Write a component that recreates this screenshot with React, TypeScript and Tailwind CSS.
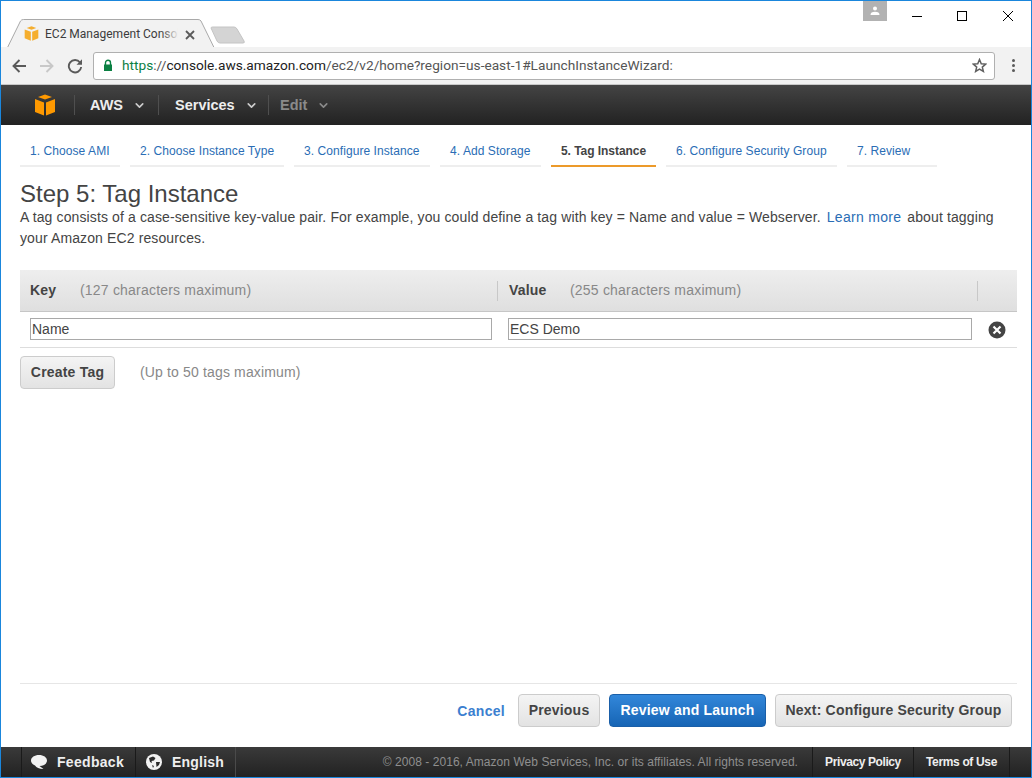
import { ChevronDown } from 'lucide-react'

const steps = [
  { label: '1. Choose AMI', w: 'w-[100px]' },
  { label: '2. Choose Instance Type', w: 'w-[154px]' },
  { label: '3. Configure Instance', w: 'w-[136px]' },
  { label: '4. Add Storage', w: 'w-[101px]' },
  { label: '5. Tag Instance', w: 'w-[105px]', active: true },
  { label: '6. Configure Security Group', w: 'w-[171px]' },
  { label: '7. Review', w: 'w-[90px]' },
]

function AwsCube({ size, fill }: { size: number; fill: string }) {
  return (
    <svg width={size} height={size} viewBox="0 0 22 22" fill={fill}>
      <path d="M11 0.5 L18 3 L11 5.5 L4 3 Z" />
      <path d="M1 5 L10 8.5 V21.5 L1 18 Z" />
      <path d="M21 5 L12 8.5 V21.5 L21 18 Z" />
    </svg>
  )
}

function TabStrip() {
  return (
    <div className="relative h-[46px] shrink-0 bg-white">
      <svg className="absolute left-0 top-0" width="260" height="46" viewBox="0 0 260 46">
        <path d="M0 46.5 H6.5 L19.5 20 Q20.5 18.5 22.5 18.5 H197 Q199 18.5 200 20 L213 46.5 H260" fill="#f2f2f2" stroke="#a9a9a9" strokeWidth="1" />
        <path d="M210 27 Q210 26 211.5 26 H233 Q235 26 236 28 L243 40 Q244 42 242 42 H219 Q217 42 216 40 Z" fill="#d4d4d4" stroke="#c4c4c4" strokeWidth="1" />
      </svg>
      <div className="absolute left-[23px] top-[25px]">
        <AwsCube size={15} fill="#f5ae2e" />
      </div>
      <div className="absolute left-[44px] top-[25px] w-[133px] overflow-hidden whitespace-nowrap text-[12px] leading-[16px] text-[#3c3c3c] font-['Roboto','Open_Sans',sans-serif]">
        EC2 Management Console
      </div>
      <div className="absolute left-[160px] top-[25px] h-[16px] w-[18px] bg-gradient-to-r from-transparent to-[#f2f2f2]" />
      <svg className="absolute left-[184px] top-[29px]" width="10" height="10" viewBox="0 0 10 10">
        <path d="M1 1 L9 9 M9 1 L1 9" stroke="#5a5a5a" strokeWidth="1.8" />
      </svg>
      <div className="absolute left-[862px] top-0 flex h-[20px] w-[24px] items-center justify-center bg-[#b2b2b2]">
        <svg width="12" height="12" viewBox="0 0 12 12">
          <circle cx="6" cy="3.5" r="2" fill="#fff" />
          <path d="M1.5 10 Q1.5 6.8 6 6.8 Q10.5 6.8 10.5 10 Z" fill="#fff" />
        </svg>
      </div>
      <svg className="absolute left-[910px] top-[8px]" width="110" height="16" viewBox="0 0 110 16">
        <path d="M1 7.5 H11" stroke="#000" strokeWidth="1" />
        <rect x="46.5" y="2.5" width="9" height="9" fill="none" stroke="#000" strokeWidth="1" />
        <path d="M92 2 L102 12 M102 2 L92 12" stroke="#000" strokeWidth="1" />
      </svg>
    </div>
  )
}

function Toolbar() {
  return (
    <div className="flex h-[37px] shrink-0 items-center bg-[#f2f2f2] pl-[10px]">
      <svg width="18" height="16" viewBox="0 0 18 16" className="mr-[9px]">
        <path d="M15 8 H3 M8.5 2 L2.5 8 L8.5 14" fill="none" stroke="#5a5a5a" strokeWidth="1.9" />
      </svg>
      <svg width="18" height="16" viewBox="0 0 18 16" className="mr-[11px]">
        <path d="M2 8 H14 M8.5 2 L14.5 8 L8.5 14" fill="none" stroke="#c8c8c8" strokeWidth="1.9" />
      </svg>
      <svg width="16" height="16" viewBox="0 0 16 16" className="mr-[10px]">
        <path d="M13 4.5 A6.2 6.2 0 1 0 14.2 9" fill="none" stroke="#5a5a5a" strokeWidth="1.9" />
        <path d="M9.5 6.8 H15 V1.3 Z" fill="#5a5a5a" />
      </svg>
      <div className="flex h-[28px] w-[902px] items-center rounded-[3px] border border-[#b0b0b0] bg-white pl-[9px] pr-[7px]">
        <svg width="10" height="13" viewBox="0 0 10 13" className="mr-[9px] shrink-0">
          <path d="M2.5 6 V3.8 A2.5 2.5 0 0 1 7.5 3.8 V6" fill="none" stroke="#0b8043" strokeWidth="1.4" />
          <rect x="1" y="5.5" width="8" height="6.5" fill="#0b8043" />
        </svg>
        <span className="flex-1 whitespace-nowrap text-[13.7px] font-['Roboto','Open_Sans',sans-serif] text-[#555]">
          <span className="text-[#0b8043]">https</span>
          ://
          <span className="text-[#222]">console.aws.amazon.com</span>
          /ec2/v2/home?region=us-east-1#LaunchInstanceWizard:
        </span>
        <svg width="15" height="15" viewBox="0 0 24 24">
          <path d="M12 2.5 L14.8 9.2 L22 9.8 L16.5 14.5 L18.2 21.5 L12 17.8 L5.8 21.5 L7.5 14.5 L2 9.8 L9.2 9.2 Z" fill="none" stroke="#5f5f5f" strokeWidth="2.4" />
        </svg>
      </div>
      <div className="ml-[17px] flex flex-col gap-[2px]">
        <span className="h-[3px] w-[3px] rounded-full bg-[#5a5a5a]" />
        <span className="h-[3px] w-[3px] rounded-full bg-[#5a5a5a]" />
        <span className="h-[3px] w-[3px] rounded-full bg-[#5a5a5a]" />
      </div>
    </div>
  )
}

function NavBar() {
  return (
    <div className="flex h-[41px] shrink-0 items-center border-t border-[#c8c8c8] bg-gradient-to-b from-[#444444] to-[#222222] font-['Liberation_Sans',sans-serif] text-[14.5px] font-bold">
      <div className="flex w-[73px] justify-end pr-[18px]">
        <AwsCube size={22} fill="#ff9900" />
      </div>
      <div className="flex h-[20px] w-[84px] items-center border-l border-[#4f4f4f] pl-[15px] text-[#eeeeee]">
        <span className="pt-[2px]">AWS</span>
        <ChevronDown size={13} strokeWidth={3} className="ml-[10px] text-[#cccccc]" />
      </div>
      <div className="flex h-[20px] w-[110px] items-center border-l border-[#4f4f4f] pl-[16px] text-[#eeeeee]">
        <span className="pt-[2px]">Services</span>
        <ChevronDown size={13} strokeWidth={3} className="ml-[10px] text-[#cccccc]" />
      </div>
      <div className="flex h-[20px] items-center border-l border-[#4f4f4f] pl-[11px] text-[#8a8a8a]">
        <span className="pt-[2px]">Edit</span>
        <ChevronDown size={13} strokeWidth={3} className="ml-[10px] text-[#8a8a8a]" />
      </div>
    </div>
  )
}

function Wizard() {
  return (
    <div className="flex gap-[10px] pl-[19px] pt-[12px]">
      {steps.map(s => (
        <div
          key={s.label}
          className={`${s.w} h-[30px] whitespace-nowrap border-b-2 pl-[10px] pt-[6px] text-[12px] leading-[16px] ${
            s.active
              ? 'border-[#ec9a2a] font-bold tracking-[-0.05px] text-[#444444]'
              : 'border-[#eeeeee] tracking-[0.07px] text-[#2a6db5]'
          }`}
        >
          {s.label}
        </div>
      ))}
    </div>
  )
}

function TagTable() {
  return (
    <div className="mt-[21px] tracking-[0.2px]">
      <div className="flex h-[42px] items-center border-b border-[#c6c6c6] bg-gradient-to-b from-[#eeeeee] to-[#dfdfdf] text-[14px]">
        <div className="flex w-[477px] pl-[10px]">
          <span className="w-[50px] font-bold text-[#444444]">Key</span>
          <span className="text-[#888888]">(127 characters maximum)</span>
        </div>
        <div className="flex h-[20px] w-[480px] items-center border-l border-[#c8c8c8] pl-[11px]">
          <span className="w-[61px] font-bold text-[#444444]">Value</span>
          <span className="text-[#888888]">(255 characters maximum)</span>
        </div>
        <div className="h-[20px] border-l border-[#c8c8c8]" />
      </div>
      <div className="flex h-[36px] items-center border-b border-[#dddddd] pb-px pl-[10px]">
        <input
          readOnly
          value="Name"
          className="h-[22px] w-[462px] border border-[#a9a9a9] bg-white px-px text-[14px] tracking-normal text-[#444444] outline-none"
        />
        <input
          readOnly
          value="ECS Demo"
          className="ml-[16px] h-[22px] w-[464px] border border-[#a9a9a9] bg-white px-px text-[14px] tracking-normal text-[#444444] outline-none"
        />
        <svg width="18" height="18" viewBox="0 0 18 18" className="ml-[16px] mt-[2px]">
          <circle cx="9" cy="9" r="8.5" fill="#444444" />
          <path d="M5.5 5.5 L12.5 12.5 M12.5 5.5 L5.5 12.5" stroke="#fff" strokeWidth="2.2" />
        </svg>
      </div>
    </div>
  )
}

function ActionButton({ label, primary, className }: { label: string; primary?: boolean; className: string }) {
  return (
    <button
      className={`h-[33px] rounded-[4px] border text-[14px] font-bold tracking-[0.2px] ${className} ${
        primary
          ? 'border-[#1a5fa8] bg-gradient-to-b from-[#3287da] to-[#1665b5] text-white'
          : 'border-[#cccccc] bg-gradient-to-b from-[#f4f4f4] to-[#e3e3e3] text-[#444444]'
      }`}
    >
      {label}
    </button>
  )
}

function Footer() {
  return (
    <div className="flex h-[30px] shrink-0 items-center bg-gradient-to-b from-[#3a3a3a] to-[#222222] font-['Liberation_Sans',sans-serif]">
      <div className="h-full w-[21px] border-r border-[#1a1a1a]" />
      <div className="flex h-full w-[114px] items-center border-r border-[#1a1a1a] pl-[8px] text-[14px] font-bold tracking-[0.3px] text-[#eeeeee]">
        <svg width="18" height="18" viewBox="0 0 18 16" className="mr-[9px]">
          <path d="M9 1 C13.5 1 17 3.4 17 6.6 C17 9.8 13.5 12 9.5 12 L13.5 15 C9 15 6.5 13.4 5 11.4 C2.6 10.5 1 8.8 1 6.6 C1 3.4 4.5 1 9 1 Z" fill="#f2f2f2" />
        </svg>
        Feedback
      </div>
      <div className="flex h-full w-[100px] items-center border-r border-[#4a4a4a] pl-[10px] text-[14px] font-bold tracking-[0.2px] text-[#eeeeee]">
        <svg width="16" height="16" viewBox="0 0 16 16" className="mr-[10px]">
          <circle cx="8" cy="8" r="8" fill="#f2f2f2" />
          <path d="M3 4 L7 2.5 L9.5 4 L8 6.5 L5.5 7 L6 9 L4 8 Z M10 8 L14 8 L13 11 L10.5 13 Z M6 11 L8 12 L7 14 Z" fill="#2b2b2b" />
        </svg>
        English
      </div>
      <div className="flex-1 pr-[14px] text-right text-[12px] tracking-[0.05px] text-[#8f8f8f]">
        © 2008 - 2016, Amazon Web Services, Inc. or its affiliates. All rights reserved.
      </div>
      <div className="flex h-full w-[102px] items-center justify-center border-x border-[#1a1a1a] text-[12px] font-bold tracking-[-0.4px] text-[#eeeeee]">
        Privacy Policy
      </div>
      <div className="flex h-full w-[96px] items-center justify-center border-r border-[#1a1a1a] text-[12px] font-bold tracking-[-0.35px] text-[#eeeeee]">
        Terms of Use
      </div>
      <div className="w-[21px]" />
    </div>
  )
}

export default function App() {
  return (
    <div className="flex h-[778px] w-[1032px] flex-col overflow-hidden border border-[#1a86dc] bg-white font-['Liberation_Sans',sans-serif]">
      <TabStrip />
      <Toolbar />
      <NavBar />
      <div className="flex min-h-0 flex-1 flex-col">
        <Wizard />
        <div className="flex flex-1 flex-col pl-[19px] pr-[14px]">
          <h1 className="mt-[12px] text-[24px] leading-[30px] text-[#444444]">Step 5: Tag Instance</h1>
          <div className="-mt-[2px] text-[14px] leading-[21px] tracking-[0.12px] text-[#444444]">
            <div className="flex whitespace-nowrap">
              <span>A tag consists of a case-sensitive key-value pair. For example, you could define a tag with key = Name and value = Webserver.</span>
              <span className="mx-[6px] tracking-[0.3px] text-[#2a6db5]">Learn more</span>
              <span>about tagging</span>
            </div>
            <div>your Amazon EC2 resources.</div>
          </div>
          <TagTable />
          <div className="mt-[8px] flex items-center">
            <ActionButton label="Create Tag" className="w-[95px]" />
            <span className="ml-[25px] text-[14px] tracking-[0.15px] text-[#888888]">(Up to 50 tags maximum)</span>
          </div>
          <div className="mt-auto flex h-[64px] items-start justify-end gap-[9px] border-t border-[#e6e6e6] pr-[5px] pt-[10px]">
            <span className="mr-[4px] mt-[7px] text-[14px] font-bold tracking-[0.3px] text-[#3b7fd0]">Cancel</span>
            <ActionButton label="Previous" className="w-[82px]" />
            <ActionButton label="Review and Launch" primary className="w-[157px]" />
            <ActionButton label="Next: Configure Security Group" className="w-[237px]" />
          </div>
        </div>
      </div>
      <Footer />
    </div>
  )
}
